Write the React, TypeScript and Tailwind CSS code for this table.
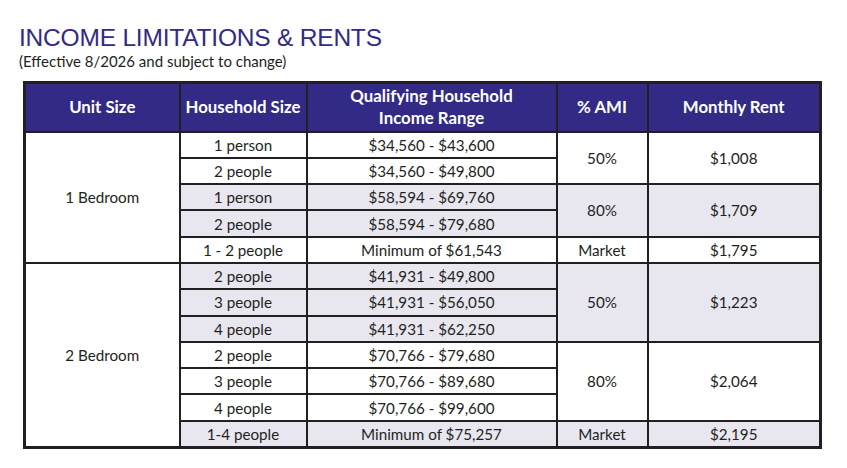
import React from "react";

type Row = {
  unit?: { label: string; span: number };
  size: string;
  range: string;
  ami?: { label: string; span: number };
  rent?: string;
  shade: boolean;
};

const rows: Row[] = [
  { unit: { label: "1 Bedroom", span: 5 }, size: "1 person", range: "$34,560 - $43,600", ami: { label: "50%", span: 2 }, rent: "$1,008", shade: false },
  { size: "2 people", range: "$34,560 - $49,800", shade: false },
  { size: "1 person", range: "$58,594 - $69,760", ami: { label: "80%", span: 2 }, rent: "$1,709", shade: true },
  { size: "2 people", range: "$58,594 - $79,680", shade: true },
  { size: "1 - 2 people", range: "Minimum of $61,543", ami: { label: "Market", span: 1 }, rent: "$1,795", shade: false },
  { unit: { label: "2 Bedroom", span: 7 }, size: "2 people", range: "$41,931 - $49,800", ami: { label: "50%", span: 3 }, rent: "$1,223", shade: true },
  { size: "3 people", range: "$41,931 - $56,050", shade: true },
  { size: "4 people", range: "$41,931 - $62,250", shade: true },
  { size: "2 people", range: "$70,766 - $79,680", ami: { label: "80%", span: 3 }, rent: "$2,064", shade: false },
  { size: "3 people", range: "$70,766 - $89,680", shade: false },
  { size: "4 people", range: "$70,766 - $99,600", shade: false },
  { size: "1-4 people", range: "Minimum of $75,257", ami: { label: "Market", span: 1 }, rent: "$2,195", shade: true },
];

const cell = "border-2 border-[#231f20] text-center align-middle p-0";

export default function App() {
  return (
    <div className="w-[847px] h-[468px] bg-white pt-[24px] pl-[19px]" style={{ fontFamily: "Lato, 'Open Sans', sans-serif" }}>
      <h1 className="text-[24.5px] leading-[28px] text-[#332a85] tracking-[-0.2px]" style={{ fontFamily: "'Liberation Sans', Arial, sans-serif" }}>
        INCOME LIMITATIONS &amp; RENTS
      </h1>
      <p className="text-[15px] leading-[18px] text-[#231f20]">(Effective 8/2026 and subject to change)</p>
      <table className="mt-[11px] ml-[4px] w-[796px] border-collapse border-[3px] border-[#231f20] text-[15.2px] text-[#231f20] table-fixed">
        <colgroup>
          <col className="w-[155px]" />
          <col className="w-[127px]" />
          <col className="w-[250px]" />
          <col className="w-[91px]" />
          <col className="w-[173px]" />
        </colgroup>
        <thead>
          <tr className="h-[49px] bg-[#332a85] text-white font-bold text-[16.8px] leading-[22px]">
            <th className={cell}>Unit Size</th>
            <th className={cell}>Household Size</th>
            <th className={cell}>
              Qualifying Household
              <br />
              Income Range
            </th>
            <th className={cell}>% AMI</th>
            <th className={cell}>Monthly Rent</th>
          </tr>
        </thead>
        <tbody>
          {rows.map((r, i) => (
            <tr key={i} className="h-[26.3px] leading-[20px]">
              {r.unit && (
                <td rowSpan={r.unit.span} className={`${cell} bg-white`}>
                  {r.unit.label}
                </td>
              )}
              <td className={`${cell} ${r.shade ? "bg-[#e8e7f0]" : "bg-white"}`}>{r.size}</td>
              <td className={`${cell} ${r.shade ? "bg-[#e8e7f0]" : "bg-white"}`}>{r.range}</td>
              {r.ami && (
                <td rowSpan={r.ami.span} className={`${cell} ${r.shade ? "bg-[#e8e7f0]" : "bg-white"}`}>
                  {r.ami.label}
                </td>
              )}
              {r.rent && (
                <td rowSpan={r.ami ? r.ami.span : 1} className={`${cell} ${r.shade ? "bg-[#e8e7f0]" : "bg-white"}`}>
                  {r.rent}
                </td>
              )}
            </tr>
          ))}
        </tbody>
      </table>
    </div>
  );
}
